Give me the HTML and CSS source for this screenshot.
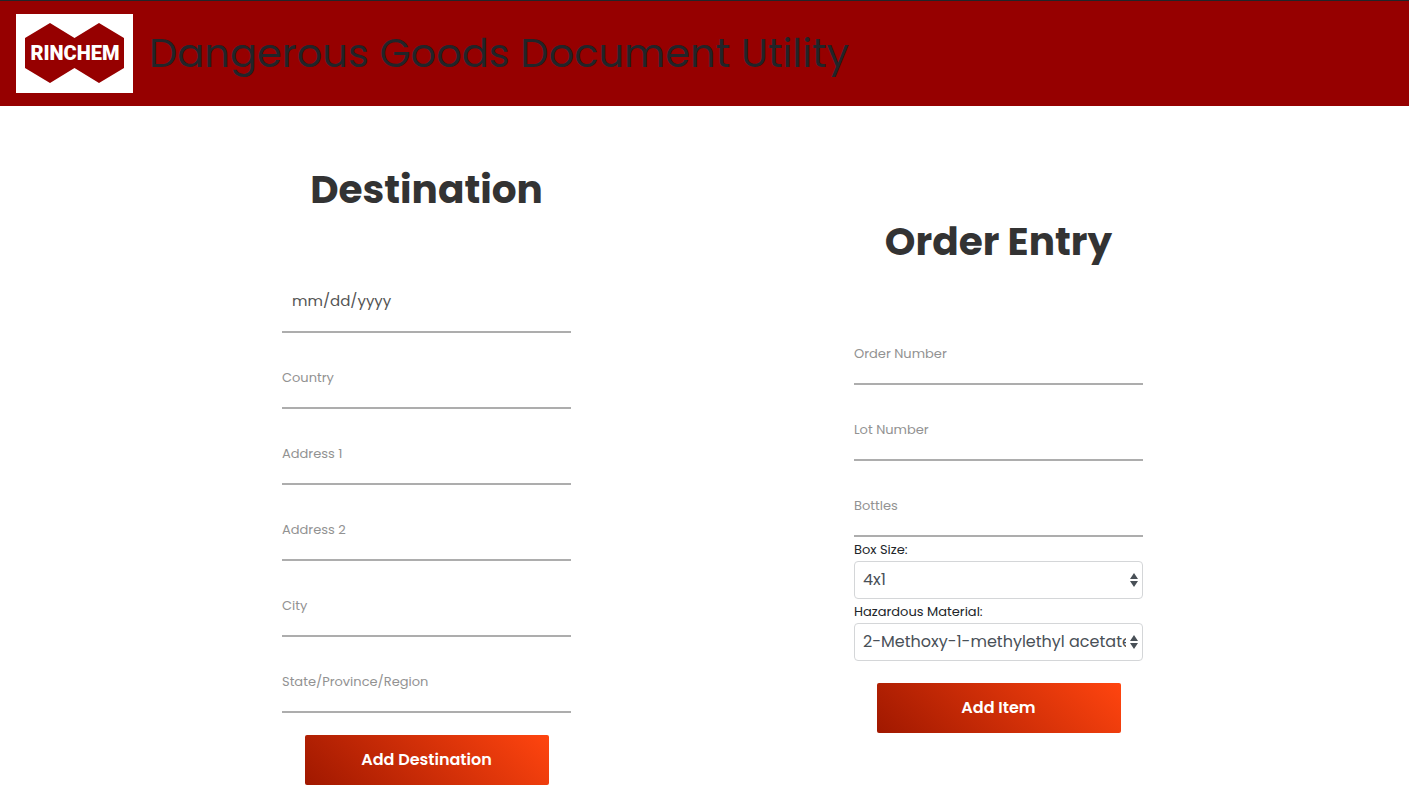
FILE: index.html
```html
<!DOCTYPE html>
<html lang="en">
<head>
  <meta charset="utf-8">
  <meta name="viewport" content="width=device-width, initial-scale=1">
  <title>Dangerous Goods Document Utility</title>
  <link rel="stylesheet" href="styles.css">
</head>
<body>
  <header class="site-header">
    <svg class="logo" viewBox="0 0 117 79" role="img" aria-label="Rinchem">
      <rect width="117" height="79" fill="#fff"/>
      <path d="M34 9 58.500 24 83 9 108 24V54L83 69 58.500 54 34 69 9 54V24Z" fill="#960000"/>
      <text class="logo-text" x="59" y="46" text-anchor="middle">RINCHEM</text>
    </svg>
    <h1 class="site-title">Dangerous Goods Document Utility</h1>
  </header>

  <main class="content">
    <section class="panel">
      <h2 class="panel-title">Destination</h2>
      <form class="form">
        <input class="field field-date" type="date" aria-label="Date">
        <input class="field" type="text" placeholder="Country" aria-label="Country">
        <input class="field" type="text" placeholder="Address 1" aria-label="Address 1">
        <input class="field" type="text" placeholder="Address 2" aria-label="Address 2">
        <input class="field" type="text" placeholder="City" aria-label="City">
        <input class="field" type="text" placeholder="State/Province/Region" aria-label="State/Province/Region">
        <button class="submit" type="button">Add Destination</button>
      </form>
    </section>

    <section class="panel panel-order">
      <h2 class="panel-title">Order Entry</h2>
      <form class="form">
        <input class="field" type="text" placeholder="Order Number" aria-label="Order Number">
        <input class="field" type="text" placeholder="Lot Number" aria-label="Lot Number">
        <input class="field" type="text" placeholder="Bottles" aria-label="Bottles">
        <label class="label" for="box-size">Box Size:</label>
        <select class="select" id="box-size">
          <option>4x1</option>
        </select>
        <label class="label" for="material">Hazardous Material:</label>
        <select class="select" id="material">
          <option>2-Methoxy-1-methylethyl acetate</option>
        </select>
        <button class="submit" type="button">Add Item</button>
      </form>
    </section>
  </main>
</body>
</html>
```
FILE: styles.css
```css
* {
  box-sizing: border-box;
}

body {
  margin: 0;
  background: #fff;
  color: #212529;
  font-family: Poppins, Inter, sans-serif;
  font-size: 13px;
}

.site-header {
  display: flex;
  align-items: center;
  gap: 16px;
  padding: 13px 16px;
  border-top: 1px solid #212529;
  background: #960000;
}

.logo {
  flex: none;
  width: 117px;
  height: 79px;
}

.logo-text {
  fill: #fff;
  font-family: Roboto, Lato, sans-serif;
  font-size: 20px;
  font-weight: 900;
}

.site-title {
  margin: 0;
  padding-bottom: 2px;
  font-size: 40px;
  font-weight: 400;
  line-height: 48px;
}

.content {
  display: grid;
  grid-template-columns: repeat(2, minmax(0, 572px));
  justify-content: center;
  padding: 60px 0 4px 16px;
}

.panel {
  display: flex;
  flex-direction: column;
  align-items: center;
}

.panel-order {
  padding-top: 52px;
}

.panel-title {
  margin: 0 0 43px;
  color: #333;
  font-size: 39px;
  font-weight: 700;
  line-height: 48px;
}

.form {
  display: flex;
  flex-direction: column;
  width: 100%;
  max-width: 289px;
}

.field {
  width: 100%;
  height: 76px;
  padding: 16px 0 0;
  border: 0;
  border-bottom: 2px solid #adadad;
  border-radius: 0;
  background: transparent;
  color: #555;
  font: 400 13px/20px Poppins, Inter, sans-serif;
  outline: none;
}

.field::placeholder {
  color: #929292;
  opacity: 1;
}

.field-date {
  padding: 14px 10px 0;
  font-size: 15px;
}

.field-date::-webkit-datetime-edit-month-field,
.field-date::-webkit-datetime-edit-day-field,
.field-date::-webkit-datetime-edit-year-field {
  padding: 0;
}

.field-date::-webkit-calendar-picker-indicator {
  display: none;
}

.label {
  padding: 3px 0 1px;
  font-size: 13px;
  line-height: 20px;
}

.select {
  width: 100%;
  height: 38px;
  padding: 0 16px 0 8px;
  border: 1px solid #d4d6d8;
  border-radius: 4px;
  appearance: none;
  background: #fff url("data:image/svg+xml,%3Csvg xmlns='http://www.w3.org/2000/svg' viewBox='0 0 8 16'%3E%3Cpath fill='%23495057' d='M4 1 8 7H0ZM0 9H8L4 15Z'/%3E%3C/svg%3E") no-repeat right 4px center / 8px 16px;
  color: #495057;
  font: 400 16px/24px Poppins, Inter, sans-serif;
}

.submit {
  align-self: center;
  width: 244px;
  height: 50px;
  margin-top: 22px;
  border: 0;
  border-radius: 2px;
  background: linear-gradient(45deg, #a01800, #ff450f);
  color: #fff;
  font: 600 16px/24px Poppins, Inter, sans-serif;
}
```
